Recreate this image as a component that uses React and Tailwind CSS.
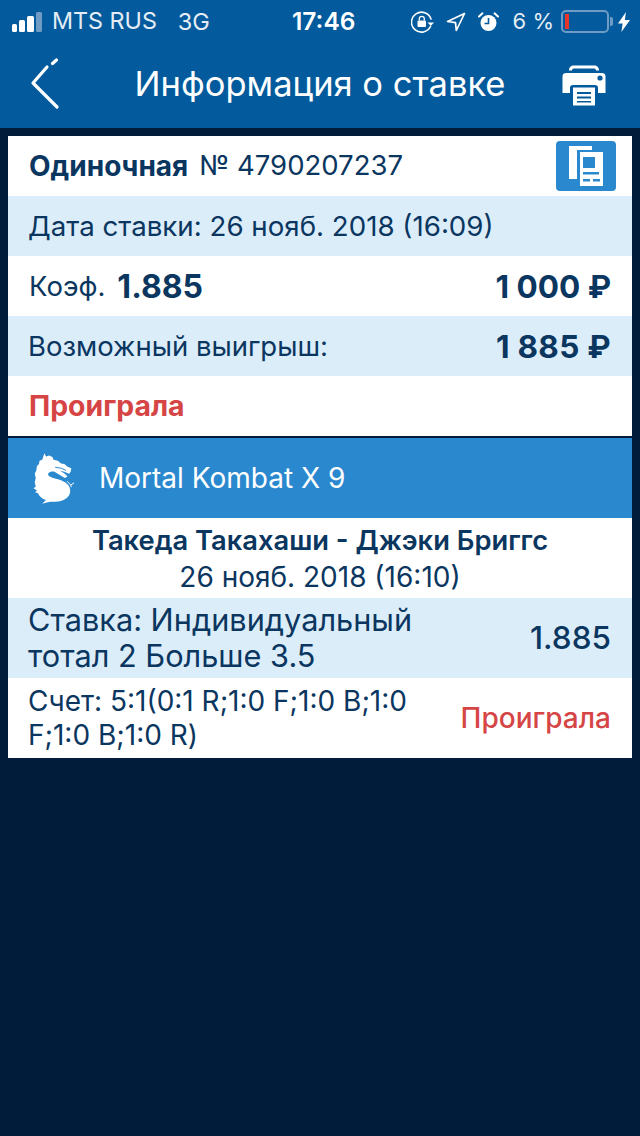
const font = { fontFamily: "Inter, 'Noto Sans', sans-serif" };

function SignalBars() {
  return (
    <div className="flex items-end gap-[2px]">
      <div className="w-[5px] h-[8px] rounded-[1.5px] bg-white" />
      <div className="w-[6px] h-[12px] rounded-[1.5px] bg-white" />
      <div className="w-[7px] h-[16px] rounded-[1.5px] bg-white" />
      <div className="w-[6px] h-[20px] rounded-[1.5px] bg-[#6f9cc4]" />
    </div>
  );
}

function RotationLock() {
  return (
    <svg width="24" height="22" viewBox="0 0 24 22" fill="none">
      <path d="M19.5 15.5A10 10 0 1 1 20 8" stroke="#fff" strokeWidth="1.6" strokeLinecap="round" />
      <path d="M16.5 11.5h6.5l-3.2 3.4z" fill="#fff" />
      <rect x="6.5" y="9.5" width="8.5" height="6.5" rx="1" fill="#fff" />
      <path d="M8.3 9.5V7.8a2.5 2.5 0 0 1 5 0v1.7" stroke="#fff" strokeWidth="1.3" />
    </svg>
  );
}

function LocationArrow() {
  return (
    <svg width="20" height="20" viewBox="0 0 20 20" fill="none">
      <path d="M18.5 1.5 1.5 9.5l8 1.2 .8 7.8z" stroke="#fff" strokeWidth="1.7" strokeLinejoin="round" />
    </svg>
  );
}

function Alarm() {
  return (
    <svg width="21" height="20" viewBox="0 0 21 20" fill="none">
      <circle cx="10.5" cy="11" r="8" fill="#fff" />
      <path d="M10.5 6v5.5H6.5" stroke="#035a9c" strokeWidth="1.6" />
      <path d="M1 4.5 4.5 1.3M20 4.5 16.5 1.3" stroke="#fff" strokeWidth="2" strokeLinecap="round" />
    </svg>
  );
}

function Battery() {
  return (
    <div className="flex items-center gap-[1px]">
      <div className="w-[48px] h-[23px] rounded-[5px] border-2 border-[#6f9cc4] p-[2px]">
        <div className="w-[4px] h-full bg-[#e8352c]" />
      </div>
      <div className="w-[3px] h-[9px] rounded-r-[2px] bg-[#6f9cc4]" />
    </div>
  );
}

function Bolt() {
  return (
    <svg width="12" height="20" viewBox="0 0 12 20">
      <path d="M8 0 0 11.5h4.6L3.4 20 12 8H6.8z" fill="#fff" />
    </svg>
  );
}

function BackIcon() {
  return (
    <svg width="30" height="54" viewBox="0 0 30 54" fill="none">
      <path d="M17 9 3 25 27 49" stroke="#fff" strokeWidth="3.2" strokeLinecap="round" strokeLinejoin="round" />
      <path d="M22.500 5.500 26.500 2" stroke="#fff" strokeWidth="3.2" strokeLinecap="round" />
    </svg>
  );
}

function PrinterIcon() {
  return (
    <svg width="44" height="42" viewBox="0 0 44 42">
      <path d="M7 6.500C7 3 9 1.500 12 1.500h20c3 0 5 1.500 5 5h-3c0-1.500-1-2-2.500-2H12.500C11 4.500 10 5 10 6.500z" fill="#fff" />
      <path d="M4 9h36a3.500 3.500 0 0 1 3.500 3.500V29H36v-5a3 3 0 0 0-3-3H11a3 3 0 0 0-3 3v5H.5V12.500A3.500 3.500 0 0 1 4 9z" fill="#fff" />
      <circle cx="38" cy="14" r="2.600" fill="#035a9c" />
      <path d="M11 23.500h22V41.500H11z" fill="#fff" />
      <path d="M15 28h14v2H15zM15 32.500h14v2H15zM15 37h14v1.600H15z" fill="#035a9c" />
    </svg>
  );
}

function CopyIcon() {
  return (
    <svg width="60" height="50" viewBox="0 0 60 50" className="block">
      <rect width="60" height="50" rx="4" fill="#2a88cf" />
      <path d="M13 5h23v4H21v29h-8z" fill="#fff" />
      <rect x="24" y="11" width="23" height="34" fill="#fff" />
      <rect x="27" y="16" width="12" height="11" fill="#2a88cf" />
      <rect x="27" y="31" width="16" height="2.500" fill="#2a88cf" />
      <rect x="27" y="38" width="7" height="2.500" fill="#2a88cf" />
      <rect x="37" y="38" width="7" height="2.500" fill="#2a88cf" />
    </svg>
  );
}

function DragonLogo() {
  return (
    <svg width="54" height="56" viewBox="2 2 50 52" className="block">
      <path
        d="M19 5l1.500 3 3-1 3 1.500 1 2.500 4 1 3 2.500 3 .5 3 2.500 3.500 1.500-.5 3-1.500 2-4-1.500-4.500-1.500 5 3.500 2 2-2.500 1.500-5-3-5-3c-3-.5-6 1-5.500 3 .5 2 5 3 10 4.500 7 2.500 10.500 5.500 10.500 10.500 0 6-6.500 10-14 10-3 0-5 0-7 .5l-5 1.500 3.500-3.500c-3.500-1-6.500-3.500-7.500-6.500l-2.500-.5 1.500-2-3-2 2-1.500-1-4 1-4-1-4 1.500-3 .5-4 2-2 .5-3 2.500-1z"
        fill="#fff"
      />
      <path d="M29 18l6 1 4 2" stroke="#2a88cf" strokeWidth="0.9" fill="none" />
      <path d="M40 31l3.500 3.500 3-2M43.500 34.500l.5 2" stroke="#fff" strokeWidth="0.9" fill="none" />
    </svg>
  );
}

export default function App() {
  return (
    <div className="w-[640px] h-[1136px] bg-[#011c3b] text-[#0a3660]" style={font}>
      <div className="bg-[#035a9c] h-[128px] text-white">
        <div className="h-[42px] flex items-center pl-[12px] pr-[10px] pt-[1px]">
          <SignalBars />
          <span className="ml-[10px] text-[23.3px] text-[#e4edf5]">MTS RUS</span>
          <span className="ml-[21px] text-[23.5px] text-[#e4edf5]">3G</span>
          <span className="ml-[82px] text-[24.5px] font-semibold">17:46</span>
          <div className="ml-auto flex items-center">
            <RotationLock />
            <div className="ml-[11px]"><LocationArrow /></div>
            <div className="ml-[12px]"><Alarm /></div>
            <span className="ml-[14px] text-[22px] text-[#e4edf5]">6 %</span>
            <div className="ml-[7px]"><Battery /></div>
            <div className="ml-[5px]"><Bolt /></div>
          </div>
        </div>
        <div className="h-[86px] flex items-center pl-[30px] pr-[34px]">
          <BackIcon />
          <div className="flex-1 text-center text-[34.5px] pl-[18px] pb-[2px]">Информация о ставке</div>
          <PrinterIcon />
        </div>
      </div>

      <div className="mx-[8px] mt-[8px]">
        <div className="h-[60px] bg-white flex items-center pl-[21px] pr-[16px]">
          <span className="text-[28px] font-bold">Одиночная</span>
          <span className="ml-[11px] text-[27.5px]">№ 4790207237</span>
          <div className="ml-auto"><CopyIcon /></div>
        </div>
        <div className="h-[60px] bg-[#dcedfa] flex items-center px-[20px] pt-[1px] text-[27.7px]">
          Дата ставки: 26 нояб. 2018 (16:09)
        </div>
        <div className="h-[60px] bg-white flex items-center pl-[21px] pr-[21px] pt-[1px] text-[27.5px]">
          <span>Коэф.</span>
          <span className="ml-[12px] text-[32px] font-bold">1.885</span>
          <span className="ml-auto text-[31.5px] font-bold">1 000 ₽</span>
        </div>
        <div className="h-[60px] bg-[#dcedfa] flex items-center pl-[20px] pr-[21px] pt-[1px] text-[27.5px]">
          <span>Возможный выигрыш:</span>
          <span className="ml-auto text-[31.5px] font-bold tracking-[0.3px]">1 885 ₽</span>
        </div>
        <div className="h-[60px] bg-white flex items-center px-[21px] text-[28.4px] font-bold text-[#d64545]">
          Проиграла
        </div>

        <div className="mt-[2px] h-[80px] bg-[#2a88cf] flex items-center pl-[18px] text-white">
          <DragonLogo />
          <span className="ml-[19px] text-[28px]">Mortal Kombat X 9</span>
        </div>
        <div className="h-[80px] bg-white flex flex-col items-center justify-center pt-[1px] text-[28px] leading-[36px]">
          <span className="font-semibold text-[27.3px]">Такеда Такахаши - Джэки Бриггс</span>
          <span>26 нояб. 2018 (16:10)</span>
        </div>
        <div className="h-[80px] bg-[#dcedfa] flex items-center justify-between pl-[20px] pr-[21px] text-[30.7px] leading-[36px]">
          <span className="w-[420px]">Ставка: Индивидуальный тотал 2 Больше 3.5</span>
          <span className="text-[31.5px] font-medium">1.885</span>
        </div>
        <div className="h-[80px] bg-white flex items-center justify-between pl-[20px] pr-[21px]">
          <span className="w-[395px] text-[28px] leading-[34px]">Счет: 5:1(0:1 R;1:0 F;1:0 B;1:0 F;1:0 B;1:0 R)</span>
          <span className="text-[28px] font-medium text-[#d64545]">Проиграла</span>
        </div>
      </div>
    </div>
  );
}
